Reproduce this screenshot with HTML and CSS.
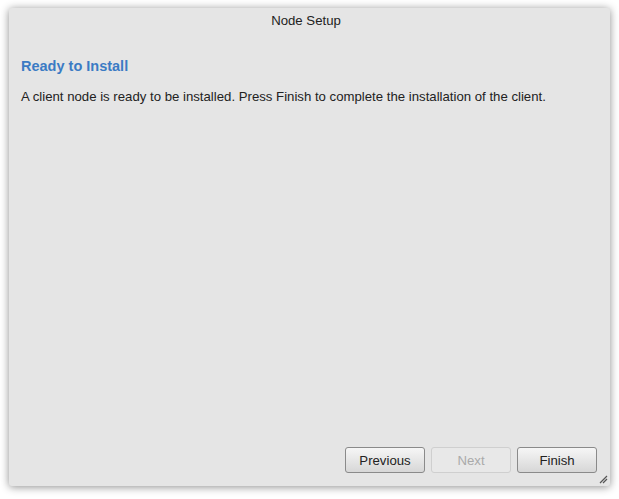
FILE: index.html
```html
<!DOCTYPE html>
<html>
<head>
<meta charset="utf-8">
<link rel="stylesheet" href="styles.css">
</head>
<body>
<div class="window">
  <div class="titlebar">Node Setup</div>
  <div class="content">
    <h1 class="heading">Ready to Install</h1>
    <p class="text">A client node is ready to be installed. Press Finish to complete the installation of the client.</p>
  </div>
  <div class="footer">
    <button class="btn">Previous</button>
    <button class="btn disabled">Next</button>
    <button class="btn">Finish</button>
  </div>
  <svg class="grip" width="10" height="10" viewBox="0 0 10 10">
    <path d="M9 2 L2 9 M9 5 L5 9" stroke="#555" stroke-width="1.2" fill="none"/>
  </svg>
</div>
</body>
</html>
```
FILE: styles.css
```css
html, body {
  margin: 0;
  padding: 0;
  background: #fff;
}
body {
  padding: 8px 9px 13px 9px;
  font-family: "Liberation Sans", Arial, sans-serif;
}
.window {
  position: relative;
  width: 601px;
  height: 478px;
  background: #e5e5e5;
  border-radius: 3px;
  box-shadow: 0 1px 8px rgba(0,0,0,0.45);
  display: flex;
  flex-direction: column;
}
.titlebar {
  text-align: center;
  font-size: 13.2px;
  color: #222;
  padding: 5px 7px 0 0;
  height: 18px;
}
.content {
  flex: 1;
  padding: 0 12px;
}
.heading {
  margin: 27px 0 0 0;
  font-size: 14.5px;
  font-weight: bold;
  color: #3b7bc4;
}
.text {
  margin: 15px 0 0 0;
  font-size: 13.2px;
  color: #222;
}
.footer {
  display: flex;
  justify-content: flex-end;
  gap: 6px;
  padding: 0 13px 13px 0;
}
.btn {
  width: 80px;
  height: 26px;
  font-family: "Liberation Sans", Arial, sans-serif;
  font-size: 13.2px;
  color: #222;
  border: 1px solid #8a8a8a;
  border-radius: 3px;
  background: linear-gradient(#f6f6f6, #d7d7d7);
  padding: 0;
}
.btn.disabled {
  color: #aaa;
  border-color: #cfcfcf;
  background: #e8e8e8;
}
.grip {
  position: absolute;
  right: 2px;
  bottom: 2px;
}
```
